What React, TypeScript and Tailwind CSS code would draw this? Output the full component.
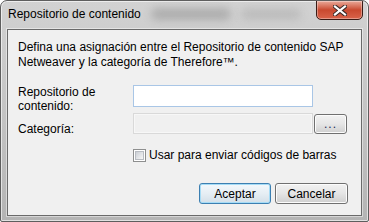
import React from "react";

const font = { fontFamily: '"Liberation Sans", Arial, sans-serif' };

function CloseButton() {
  return (
    <div className="absolute top-[-1px] right-[5px] w-[47px] h-[20px] rounded-b-[5px] border border-[#3a1b15] bg-gradient-to-b from-[#e9a99a] via-[#c9492f] to-[#d9634a] flex items-center justify-center shadow-[inset_0_0_0_1px_rgba(255,255,255,0.35)]">
      <svg width="14" height="11" viewBox="0 0 14 11">
        <path d="M2 1.5 L12 9.5 M12 1.5 L2 9.5" stroke="#3b2a28" strokeWidth="4.2" strokeLinecap="square" />
        <path d="M2 1.5 L12 9.5 M12 1.5 L2 9.5" stroke="#ffffff" strokeWidth="2.2" strokeLinecap="square" />
      </svg>
    </div>
  );
}

function WinButton({ label, primary }: { label: string; primary?: boolean }) {
  return (
    <div
      className={
        "h-[21px] rounded-[3px] border flex items-center justify-center text-[12px] text-black bg-gradient-to-b " +
        (primary
          ? "w-[72px] border-[#3c7fb1] from-[#f3f8fb] via-[#e6eef4] to-[#d3dfe8] shadow-[inset_0_0_0_1px_#a6dcf6]"
          : "w-[73px] border-[#707070] from-[#f2f2f2] via-[#e5e5e5] to-[#cfcfcf] shadow-[inset_0_0_0_1px_#fcfcfc]")
      }
    >
      {label}
    </div>
  );
}

export default function App() {
  return (
    <div style={font} className="w-[369px] h-[222px] bg-white">
      <div className="relative w-[369px] h-[222px] flex flex-col border border-[#5e5e5e] rounded-t-[7px] rounded-b-[2px] px-[6px] pb-[5px] bg-gradient-to-b from-[#d2d2d2] via-[#c4c4c4] to-[#b4b4b4] shadow-[inset_0_0_0_1px_rgba(255,255,255,0.6)] overflow-hidden">
        <div className="absolute left-[150px] top-[7px] w-[80px] h-[12px] bg-[#7a7a7a] opacity-40 blur-[4px] rounded-full" />
        <div className="absolute left-[240px] top-[8px] w-[60px] h-[10px] bg-[#8a8a8a] opacity-30 blur-[4px] rounded-full" />
        <div className="h-[28px] relative flex items-start">
          <span className="mt-[6px] pl-[1px] text-[12px] leading-[15px] text-black">Repositorio de contenido</span>
        </div>
        <CloseButton />
        <div className="relative flex-1 bg-[#f0f0f0] border border-[#6a6a6a] shadow-[0_0_0_1px_rgba(255,255,255,0.45)] pt-[10px] pl-[10px] pr-[13px] flex flex-col text-[12px] text-black">
          <p className="leading-[15px]">
            Defina una asignación entre el Repositorio de contenido SAP
            <br />
            Netweaver y la categoría de Therefore™.
          </p>
          <div className="mt-[15px] flex items-start">
            <div className="w-[115px] leading-[14px]">
              Repositorio de
              <br />
              contenido:
            </div>
            <div className="w-[180px] h-[22px] bg-white border border-[#a9c6e6]" />
          </div>
          <div className="flex items-start">
            <div className="w-[115px] leading-[14px] mt-[9px]">Categoría:</div>
            <div className="w-[180px] h-[21px] bg-[#f0f0f0] border border-[#d9d9d9] shadow-[inset_0_0_0_1px_#f7f7f7]" />
            <div className="ml-[1px] mt-[1px] w-[33px] h-[20px] rounded-[3px] border border-[#707070] bg-gradient-to-b from-[#f2f2f2] via-[#e6e6e6] to-[#cfcfcf] shadow-[inset_0_0_0_1px_#fcfcfc] flex items-center justify-center">
              <span className="text-[12px] leading-none tracking-[1px] text-[#1a2a55]">...</span>
            </div>
          </div>
          <div className="mt-[13px] ml-[115px] flex items-center h-[13px]">
            <div className="w-[13px] h-[13px] border border-[#8e8f8f] bg-white p-[1px]">
              <div className="w-full h-full bg-gradient-to-br from-[#cbcfd5] to-[#f7f7f7] border border-[#b8bcc2]" />
            </div>
            <span className="ml-[3px] leading-[15px] whitespace-nowrap">Usar para enviar códigos de barras</span>
          </div>
          <div className="mt-[21px] flex justify-end gap-[4px]">
            <WinButton label="Aceptar" primary />
            <WinButton label="Cancelar" />
          </div>
        </div>
      </div>
    </div>
  );
}
